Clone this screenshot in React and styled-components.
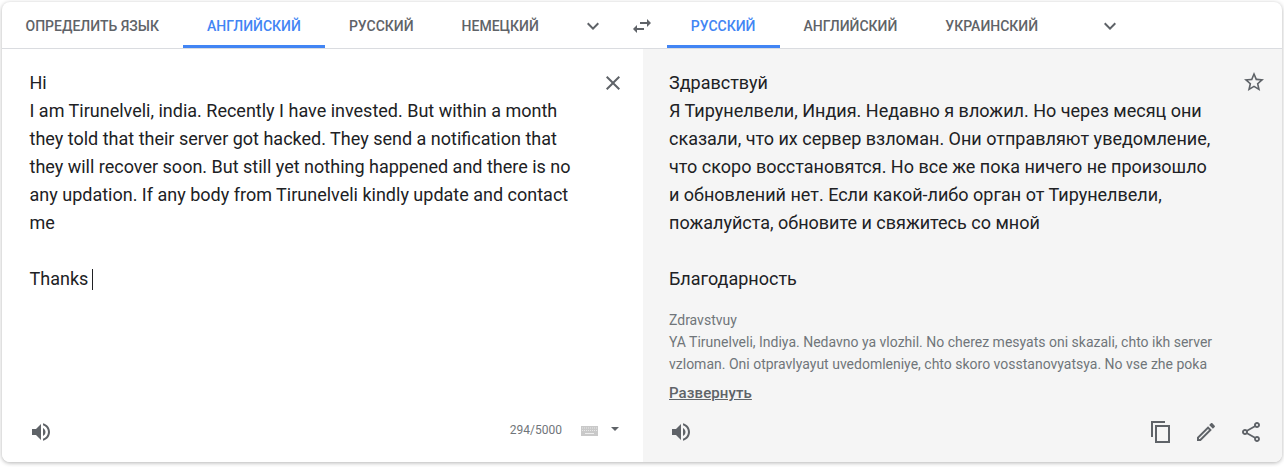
import React from "react";
import styled, { createGlobalStyle } from "styled-components";

const GlobalStyle = createGlobalStyle`
  html, body { margin: 0; padding: 0; background: #fff; }
  body { font-family: Roboto, "Liberation Sans", sans-serif; }
`;

const ICONS = {
  chevron: "M7.41 8.59L12 13.17l4.59-4.58L18 10l-6 6-6-6z",
  swap: "M6.99 11L3 15l3.99 4v-3H14v-2H6.99v-3zM21 9l-3.99-4v3H10v2h7.01v3L21 9z",
  close: "M19 6.41L17.59 5 12 10.59 6.41 5 5 6.41 10.59 12 5 17.59 6.41 19 12 13.41 17.59 19 19 17.59 13.41 12z",
  star: "M22 9.24l-7.19-.62L12 2 9.19 8.63 2 9.24l5.46 4.73L5.82 21 12 17.27 18.18 21l-1.63-7.03L22 9.24zM12 15.4l-3.76 2.27 1-4.28-3.32-2.88 4.38-.38L12 6.1l1.71 4.04 4.38.38-3.32 2.88 1 4.28L12 15.4z",
  speaker: "M3 9v6h4l5 5V4L7 9H3zm13.5 3c0-1.77-1.02-3.29-2.5-4.03v8.05c1.48-.73 2.5-2.25 2.5-4.02zM14 3.23v2.06c2.89.86 5 3.54 5 6.71s-2.11 5.85-5 6.71v2.06c4.01-.91 7-4.49 7-8.77s-2.99-7.86-7-8.77z",
  copy: "M16 1H2v16h2V3h12V1zm5 4H6v18h15V5zm-2 16H8V7h11v14z",
  edit: "M14.06 9.02l.92.92L5.92 19H5v-.92l9.06-9.06M17.66 3c-.25 0-.51.1-.7.29l-1.83 1.83 3.75 3.75 1.83-1.83c.39-.39.39-1.02 0-1.41l-2.34-2.34c-.2-.2-.45-.29-.71-.29zm-3.6 3.19L3 17.25V21h3.75L17.81 9.94l-3.75-3.75z",
  share: "M18 16.08c-.76 0-1.44.3-1.96.77L8.91 12.7c.05-.23.09-.46.09-.7s-.04-.47-.09-.7l7.05-4.11c.54.5 1.25.81 2.04.81 1.66 0 3-1.34 3-3s-1.34-3-3-3-3 1.34-3 3c0 .24.04.47.09.7L8.04 9.81C7.5 9.31 6.79 9 6 9c-1.66 0-3 1.34-3 3s1.34 3 3 3c.79 0 1.5-.31 2.04-.81l7.12 4.16c-.05.21-.08.43-.08.65 0 1.61 1.31 2.92 2.92 2.92s2.92-1.31 2.92-2.92-1.31-2.92-2.92-2.92zM18 4c.55 0 1 .45 1 1s-.45 1-1 1-1-.45-1-1 .45-1 1-1zM6 13c-.55 0-1-.45-1-1s.45-1 1-1 1 .45 1 1-.45 1-1 1zm12 7.02c-.55 0-1-.45-1-1s.45-1 1-1 1 .45 1 1-.45 1-1 1z",
};

const Page = styled.div`
  width: 1284px;
  height: 467px;
  padding: 2px 2px 5px 2px;
  box-sizing: border-box;
  overflow: hidden;
`;

const Card = styled.div`
  height: 100%;
  display: flex;
  flex-direction: column;
  background: #fff;
  border-radius: 8px;
  overflow: hidden;
  box-shadow: 0 1px 4px rgba(0, 0, 0, 0.3);
`;

const Header = styled.div`
  display: flex;
  align-items: stretch;
  height: 46px;
  flex-shrink: 0;
  margin-left: -0.5px;
  border-bottom: 1px solid #dadce0;
`;

const Tab = styled.div`
  display: flex;
  align-items: center;
  box-sizing: border-box;
  height: 46px;
  padding: 5px 24px 0;
  font-size: 14px;
  font-weight: 500;
  text-transform: uppercase;
  white-space: nowrap;
  color: ${props => (props.$active ? "#4285f4" : "#5f6368")};
  border-bottom: 3px solid ${props => (props.$active ? "#4285f4" : "transparent")};
`;

const HeaderIcon = styled.svg`
  width: 24px;
  height: 24px;
  align-self: center;
  flex-shrink: 0;
  fill: #5f6368;
  margin-top: 2px;
  margin-left: ${props => props.$left || "0"};
  margin-right: ${props => props.$right || "0"};
`;

const Body = styled.div`
  flex: 1;
  display: grid;
  grid-template-columns: 641px 1fr;
  min-height: 0;
`;

const Panel = styled.div`
  display: flex;
  flex-direction: column;
  background: ${props => (props.$result ? "#f5f5f5" : "#fff")};
  padding: 20px ${props => (props.$result ? "16px" : "18px")} 18px ${props => (props.$result ? "26px" : "27.5px")};
  min-height: 0;
`;

const TextRow = styled.div`
  display: flex;
  justify-content: space-between;
  align-items: flex-start;
  flex: 1;
`;

const MainText = styled.div`
  font-size: 18px;
  line-height: 28px;
  color: #202124;
  white-space: pre-line;
`;

const Caret = styled.span`
  display: inline-block;
  width: 1px;
  height: 21px;
  margin-left: 4px;
  vertical-align: -5px;
  background: #202124;
`;

const PanelIcon = styled.svg`
  width: 24px;
  height: 24px;
  fill: #5f6368;
  flex-shrink: 0;
  display: block;
  margin-top: ${props => props.$top || "0"};
  margin-left: ${props => props.$left || "0"};
`;

const Translit = styled.div`
  margin-top: 16px;
  font-size: 14px;
  line-height: 22px;
  color: #70757a;
  white-space: pre-line;
`;

const Expand = styled.div`
  margin-top: 7px;
  font-size: 15px;
  line-height: 22px;
  font-weight: 500;
  letter-spacing: 0.1px;
  color: #5f6368;
  text-decoration: underline;
`;

const Footer = styled.div`
  display: flex;
  align-items: center;
  justify-content: space-between;
  height: 24px;
`;

const FooterGroup = styled.div`
  display: flex;
  align-items: center;
  gap: ${props => props.$gap || "0"};
  margin-right: ${props => props.$right || "0"};
  margin-bottom: ${props => props.$bottom || "0"};
`;

const Counter = styled.div`
  font-size: 12px;
  color: #70757a;
  margin-right: 19px;
`;

const Keyboard = styled.svg`
  width: 17px;
  height: 10px;
  display: block;
  margin-top: 1px;
`;

const DropArrow = styled.div`
  width: 0;
  height: 0;
  margin-left: 13px;
  margin-right: 6px;
  margin-bottom: 3px;
  border-left: 4px solid transparent;
  border-right: 4px solid transparent;
  border-top: 4px solid #5f6368;
`;

const Icon = ({ name, ...rest }) => (
  <PanelIcon viewBox="0 0 24 24" {...rest}>
    <path d={ICONS[name]} />
  </PanelIcon>
);

const source = `Hi
I am Tirunelveli, india. Recently I have invested. But within a month
they told that their server got hacked. They send a notification that
they will recover soon. But still yet nothing happened and there is no
any updation. If any body from Tirunelveli kindly update and contact
me

Thanks`;

const result = `Здравствуй
Я Тирунелвели, Индия. Недавно я вложил. Но через месяц они
сказали, что их сервер взломан. Они отправляют уведомление,
что скоро восстановятся. Но все же пока ничего не произошло
и обновлений нет. Если какой-либо орган от Тирунелвели,
пожалуйста, обновите и свяжитесь со мной

Благодарность`;

const translit = `Zdravstvuy
YA Tirunelveli, Indiya. Nedavno ya vlozhil. No cherez mesyats oni skazali, chto ikh server
vzloman. Oni otpravlyayut uvedomleniye, chto skoro vosstanovyatsya. No vse zhe poka`;

const App = () => (
  <Page>
    <GlobalStyle />
    <Card>
      <Header>
        <Tab>Определить язык</Tab>
        <Tab $active>Английский</Tab>
        <Tab>Русский</Tab>
        <Tab>Немецкий</Tab>
        <HeaderIcon viewBox="0 0 24 24" $left="18.5px">
          <path d={ICONS.chevron} />
        </HeaderIcon>
        <HeaderIcon viewBox="0 0 24 24" $left="25px" $right="12.5px">
          <path d={ICONS.swap} />
        </HeaderIcon>
        <Tab $active>Русский</Tab>
        <Tab>Английский</Tab>
        <Tab>Украинский</Tab>
        <HeaderIcon viewBox="0 0 24 24" $left="36px">
          <path d={ICONS.chevron} />
        </HeaderIcon>
      </Header>
      <Body>
        <Panel>
          <TextRow>
            <MainText>
              {source}
              <Caret />
            </MainText>
            <Icon name="close" $top="2px" />
          </TextRow>
          <Footer>
            <Icon name="speaker" $left="-0.5px" />
            <FooterGroup $bottom="4px">
              <Counter>294/5000</Counter>
              <Keyboard viewBox="0 0 17 10">
                <rect width="17" height="10" fill="#c9c9c9" />
                <path d="M1 2h15M1 4.5h15" stroke="#e8e8e8" strokeWidth="1" strokeDasharray="1 1" />
                <path d="M4 7.5h9" stroke="#eeeeee" strokeWidth="1" />
              </Keyboard>
              <DropArrow />
            </FooterGroup>
          </Footer>
        </Panel>
        <Panel $result>
          <TextRow>
            <div>
              <MainText>{result}</MainText>
              <Translit>{translit}</Translit>
              <Expand>Развернуть</Expand>
            </div>
            <Icon name="star" $top="1px" />
          </TextRow>
          <Footer>
            <Icon name="speaker" />
            <FooterGroup $gap="21px" $right="3px">
              <Icon name="copy" />
              <Icon name="edit" />
              <Icon name="share" />
            </FooterGroup>
          </Footer>
        </Panel>
      </Body>
    </Card>
  </Page>
);

export default App;
